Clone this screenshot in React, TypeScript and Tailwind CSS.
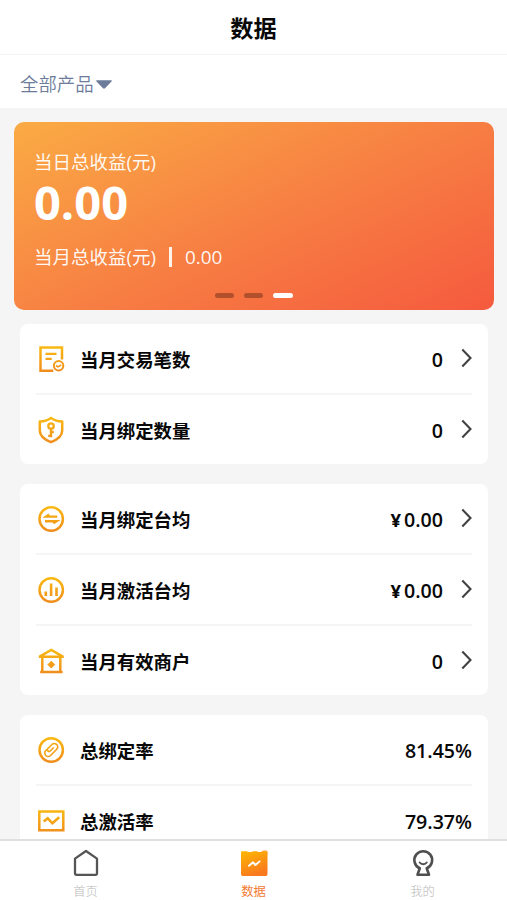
import type { ReactNode } from "react";

const Grad = ({ id }: { id: string }) => (
  <defs>
    <linearGradient id={id} x1="0" y1="0" x2="0" y2="28" gradientUnits="userSpaceOnUse">
      <stop offset="0" stopColor="#f8bc10" />
      <stop offset="1" stopColor="#f08a1e" />
    </linearGradient>
  </defs>
);

function Icon({ id, children }: { id: string; children: ReactNode }) {
  return (
    <svg
      className="block h-7 w-7 shrink-0"
      viewBox="0 0 28 28"
      fill="none"
      stroke={`url(#${id})`}
      strokeWidth="2.5"
    >
      <Grad id={id} />
      {children}
    </svg>
  );
}

const icons: Record<string, ReactNode> = {
  bill: (
    <Icon id="bill">
      <path d="M25 14.500V2.500H3.500v23.200h12.800" />
      <path d="M8.500 8.800h11M8.500 13.900h6.200" strokeWidth="2.300" />
      <circle cx="21.600" cy="20.800" r="4.700" strokeWidth="2" />
      <path d="m19 20.500 1.900 1.400 3.300-1.900" strokeWidth="1.600" />
    </Icon>
  ),
  shield: (
    <Icon id="shield">
      <path d="M14 1.900c3.500 2.500 7 3.500 11.200 3.600v9c0 5.300-4.400 9-11.200 11.700C7.200 23.500 2.800 19.800 2.800 14.500v-9C7 5.400 10.500 4.400 14 1.900Z" strokeLinejoin="round" />
      <circle cx="14" cy="10" r="2.700" strokeWidth="2.300" />
      <path d="M14 12.300v9M14 16h2.800M14 19.900h-2.800" strokeWidth="2.400" />
    </Icon>
  ),
  swap: (
    <Icon id="swap">
      <circle cx="14.200" cy="14" r="11.700" />
      <path d="M20.300 11.600H9.200l3-2M8 16.300h11.500l-3.200 2" strokeWidth="2.400" />
    </Icon>
  ),
  bars: (
    <Icon id="bars">
      <circle cx="14.200" cy="14" r="11.700" />
      <path d="M8.800 15.500v4.500M14.100 7.500V20M19.500 11.500V20" strokeWidth="2.600" />
    </Icon>
  ),
  shop: (
    <Icon id="shop">
      <path d="M1.800 9.800h25M3 9.300 14.300 3l11.200 6.300M5.300 10v15M23.300 10v15M3.200 25.100h22.400" strokeWidth="2.500" />
      <path d="m14.300 14.200 3.400 3.400-3.400 3.400-3.400-3.400Z" fill="url(#shop)" strokeWidth="1" />
    </Icon>
  ),
  link: (
    <Icon id="link">
      <circle cx="14.200" cy="14" r="11.700" />
      <g transform="rotate(-45 14.200 14)" strokeWidth="1.600">
        <path d="M12 10.600h6.600a3.400 3.400 0 0 1 0 6.800H9.900a3.400 3.400 0 0 1 0-6.800h2" />
        <path d="M17.800 14h-5.800a2.200 2.200 0 0 1 0-3.400" />
      </g>
    </Icon>
  ),
  trend: (
    <Icon id="trend">
      <path d="M2.300 4.600h24v18.700h-24Z" />
      <path d="m6.700 14.600 4-3.300 4.700 5 6.800-6" strokeWidth="2.600" />
    </Icon>
  ),
};

type Item = { icon: string; label: string; value: string; yen?: boolean; link?: boolean };

const groups: Item[][] = [
  [
    { icon: "bill", label: "当月交易笔数", value: "0", link: true },
    { icon: "shield", label: "当月绑定数量", value: "0", link: true },
  ],
  [
    { icon: "swap", label: "当月绑定台均", value: "0.00", yen: true, link: true },
    { icon: "bars", label: "当月激活台均", value: "0.00", yen: true, link: true },
    { icon: "shop", label: "当月有效商户", value: "0", link: true },
  ],
  [
    { icon: "link", label: "总绑定率", value: "81.45%" },
    { icon: "trend", label: "总激活率", value: "79.37%" },
  ],
];

function Row({ item }: { item: Item }) {
  return (
    <div className="flex h-[71px] items-center border-b-2 border-[#f5f5f5] last:h-[69px] last:border-b-0">
      <div className="ml-px">{icons[item.icon]}</div>
      <span className="ml-[15px] mt-0.5 text-[18.4px] font-bold leading-7">{item.label}</span>
      <span className="ml-auto mt-0.5 flex items-baseline text-[19.6px] font-semibold leading-7">
        {item.yen && <span className="mr-[3px] text-[18.500px] font-bold">¥</span>}
        {item.value}
      </span>
      {item.link && (
        <svg className="mb-px ml-[18px] h-5 w-[11px]" viewBox="0 0 11 20" fill="none" stroke="#424242" strokeWidth="2.100">
          <path d="m1.300 1.500 8.200 8.500-8.200 8.500" />
        </svg>
      )}
    </div>
  );
}

export default function App() {
  return (
    <div className="flex h-[900px] w-[507px] flex-col overflow-hidden bg-[#f5f5f5] font-['Open_Sans','Noto_Sans_CJK_SC',sans-serif] text-[#080808]">
      <header className="flex h-[55px] shrink-0 items-center justify-center border-b border-[#f2f2f2] bg-white pt-0.5">
        <h1 className="text-[23.2px] font-bold leading-8">数据</h1>
      </header>
      <div className="flex h-[53px] shrink-0 items-center bg-white pl-5 pt-1 text-[#6c7c9a]">
        <span className="text-[18.4px] font-[350] leading-7">全部产品</span>
        <svg className="ml-0.5 mt-px h-[9px] w-4" viewBox="0 0 16 9">
          <path d="M1 .3h14c.8 0 1 .6.500 1.100L9 8.300c-.6.600-1.400.600-2 0L.5 1.400C0 .9.200.3 1 .3Z" fill="currentColor" />
        </svg>
      </div>

      <main className="min-h-0 flex-1 overflow-hidden pt-3.5">
        <section className="ml-3.5 mr-[13px] flex h-[188px] flex-col rounded-[10px] bg-[linear-gradient(155deg,#faab44_0%,#f77f43_52%,#f55a3e_100%)] px-5 text-white">
          <p className="mt-[29px] text-[18.5px] leading-[22px] text-white/95">当日总收益(元)</p>
          <p className="mt-[5px] text-[47px] font-bold leading-[48px]">0.00</p>
          <div className="mt-[17px] flex items-center text-[18.5px] leading-7 text-white/95">
            <span>当月总收益(元)</span>
            <span className="ml-[13px] h-5 w-[3px] bg-white/90" />
            <span className="ml-[13px] text-[18.9px]">0.00</span>
          </div>
          <div className="mb-3 mt-auto flex justify-center gap-2.5">
            <span className="h-[5px] w-[19px] rounded-full bg-[#b2502c]" />
            <span className="h-[5px] w-[19px] rounded-full bg-[#b2502c]" />
            <span className="h-[5px] w-5 rounded-full bg-white" />
          </div>
        </section>

        <div className="ml-5 mr-[19px] mt-3.5 flex flex-col gap-5">
          {groups.map((group) => (
            <section key={group[0].label} className="rounded-lg bg-white px-4">
              {group.map((item) => (
                <Row key={item.label} item={item} />
              ))}
            </section>
          ))}
        </div>
      </main>

      <nav className="grid h-[61px] shrink-0 grid-cols-3 border-t-2 border-[#dfdfdf] bg-white text-[12.3px] font-light leading-4 text-[#b8b8b8]">
        <div className="flex flex-col items-center pl-0.5 pt-2">
          <svg className="h-7 w-7" viewBox="0 0 28 28" fill="none" stroke="#555" strokeWidth="2.300" strokeLinejoin="round">
            <path d="M3 9.600 14 2l11 7.600v14.600c0 1-.6 1.600-1.600 1.600H4.600c-1 0-1.600-.6-1.600-1.600Z" />
          </svg>
          <span className="mt-[7px]">首页</span>
        </div>
        <div className="flex flex-col items-center pt-2 text-[#f47b30]">
          <svg className="h-7 w-7" viewBox="0 0 28 28">
            <defs>
              <linearGradient id="tab" x1="0" y1="0" x2=".4" y2="1">
                <stop offset="0" stopColor="#ffb800" />
                <stop offset="1" stopColor="#f9791f" />
              </linearGradient>
            </defs>
            <circle cx="24.800" cy="4" r="3" fill="#fbc18a" />
            <path d="M2 2.300h5l1 .7h4l1-.7h4l1 .7h3l1-.7h4.500c.6 0 1 .4 1 1v21.700c0 1.300-.8 2.100-2.100 2.100H3.100C1.800 27.100 1 26.300 1 25V3.300c0-.6.400-1 1-1Z" fill="url(#tab)" />
            <path d="m9 16.800 4-3.500 2.400 2.700 4.200-3.600" fill="none" stroke="#fff" strokeWidth="1.900" strokeLinecap="round" strokeLinejoin="round" />
          </svg>
          <span className="mt-[7px] font-normal">数据</span>
        </div>
        <div className="flex flex-col items-center pt-2">
          <svg className="h-7 w-7" viewBox="0 0 28 28" fill="none" stroke="#4f4f4f" strokeWidth="2.600" strokeLinejoin="round">
            <path d="M10.800 19.300a8.900 8.900 0 1 1 6.900 0l2.300 6.500H8.500Z" />
            <path d="M10.700 13.500c1.700 2.200 5.300 2.200 7 0" strokeWidth="2" strokeLinecap="round" />
          </svg>
          <span className="mt-[7px]">我的</span>
        </div>
      </nav>
    </div>
  );
}
